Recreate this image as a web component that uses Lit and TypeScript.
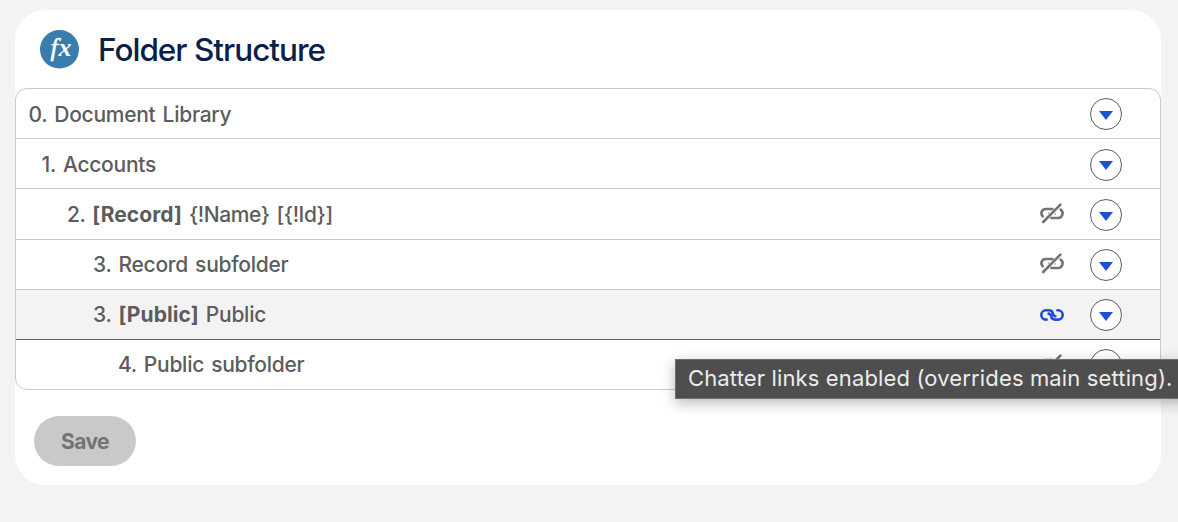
import { LitElement, html, css, svg, nothing } from 'lit';
import { customElement, property } from 'lit/decorators.js';

type LinkState = 'none' | 'off' | 'on';

interface Folder {
  level: number;
  tag?: string;
  name: string;
  link: LinkState;
  active?: boolean;
}

const folders: Folder[] = [
  { level: 0, name: 'Document Library', link: 'none' },
  { level: 1, name: 'Accounts', link: 'none' },
  { level: 2, tag: '[Record]', name: '{!Name} [{!Id}]', link: 'off' },
  { level: 3, name: 'Record subfolder', link: 'off' },
  { level: 3, tag: '[Public]', name: 'Public', link: 'on', active: true },
  { level: 4, name: 'Public subfolder', link: 'off' },
];

@customElement('link-icon')
export class LinkIcon extends LitElement {
  @property() state: LinkState = 'off';

  static styles = css`
    :host {
      display: block;
      width: 24px;
      height: 20px;
    }

    svg {
      display: block;
      overflow: visible;
      fill: none;
      stroke: currentColor;
      stroke-width: 2.6;
      stroke-linecap: round;
    }
  `;

  render() {
    const linked = svg`
      <path d="M6.6 14.6H6A4.7 4.7 0 0 1 6 5.2H8.6C11.6 5.2 12.6 6.8 12.8 8.4C13 10 13.8 11 15.4 11.2" />
      <path d="M17.4 5.2H18A4.7 4.7 0 0 1 18 14.6H15.4C12.4 14.6 11.4 13 11.2 11.4C11 9.8 10.2 8.8 8.6 8.6" />
    `;
    const unlinked = svg`
      <path d="M2.8 12.4C-.2 9.2 2 5 5.8 5H12.4" />
      <path d="M20.6 5.6C24.6 8.4 22 14 18.2 14H11.4" />
      <path d="M3.2 18L20.4 .6" />
      <path stroke-width="1.2" d="M8.4 9h.6M15 10h.6" />
    `;
    return html`<svg width="24" height="20" viewBox="0 0 24 20">
      ${this.state === 'on' ? linked : unlinked}
    </svg>`;
  }
}

@customElement('folder-row')
export class FolderRow extends LitElement {
  @property({ attribute: false }) folder!: Folder;

  static styles = css`
    :host {
      display: flex;
      align-items: center;
      color: #5c5c5c;
      font-size: 21px;
      font-weight: 500;
    }

    .label {
      flex: 1;
      white-space: pre;
      line-height: 26px;
      padding-top: 1px;
      letter-spacing: -0.27px;
      word-spacing: 1.8px;
    }

    .level-0 { padding: 3px 0 0 12.5px; }
    .level-1 { padding: 3px 0 0 25.5px; }
    .level-2 { padding-left: 51px; letter-spacing: -0.42px; }
    .level-3 { padding-left: 77px; }
    .level-4 { padding-left: 102px; }

    b {
      font-weight: 700;
      letter-spacing: 0.08px;
    }

    link-icon {
      margin-right: 26px;
      color: #747474;
    }

    .level-3 ~ .off {
      margin-bottom: 1px;
    }

    .on {
      color: #1f4fd6;
    }

    .menu {
      box-sizing: border-box;
      width: 32px;
      height: 32px;
      margin: 1px 38px 0 0;
      padding: 0;
      border: 1px solid #5c5c5c;
      border-radius: 50%;
      background: #fff;
      display: flex;
      align-items: center;
      justify-content: center;
    }

    .level-1 ~ .menu {
      margin-top: 3px;
    }

    .menu svg {
      margin: 3px 1px 0 0;
      fill: #1f4fd6;
    }

    .level-1 ~ .menu svg {
      margin-top: 1px;
    }
  `;

  render() {
    const { level, tag, name, link } = this.folder;
    return html`
      <div class="label level-${level}">${level}. ${tag ? html`<b>${tag}</b> ` : nothing}${name}</div>
      ${link === 'none' ? nothing : html`<link-icon class=${link} .state=${link}></link-icon>`}
      <button class="menu">
        <svg width="14" height="9" viewBox="0 0 14 9"><path d="M0 0H14L7 9Z" /></svg>
      </button>
    `;
  }
}

@customElement('app-root')
export class AppRoot extends LitElement {
  static styles = css`
    :host {
      display: block;
      position: relative;
      box-sizing: border-box;
      height: 522px;
      padding: 10px 17px 0 15px;
      overflow: hidden;
      background: #f3f3f3;
      font-family: Inter, 'Liberation Sans', sans-serif;
    }

    .card {
      height: 475px;
      border-radius: 30px;
      background: #fff;
    }

    header {
      display: flex;
      align-items: center;
      height: 78px;
      padding-left: 25px;
      gap: 19px;
    }

    h1 {
      margin: 2px 0 0;
      color: #0b1f4b;
      font-size: 31.5px;
      font-weight: 450;
      letter-spacing: -1px;
      line-height: 40px;
    }

    .fx {
      fill: #fff;
      font-family: 'Liberation Serif', serif;
      font-style: italic;
    }

    .f {
      stroke: #fff;
      stroke-width: 0.6;
    }

    .x {
      font-weight: 700;
    }

    .list {
      box-sizing: border-box;
      height: 302px;
      border: 1px solid #c9c9c9;
      border-radius: 12px;
      overflow: hidden;
      display: grid;
      grid-template-rows: 50px 50px 51px 50px 50px 49px;
    }

    folder-row {
      border-bottom: 1px solid #c9c9c9;
    }

    folder-row:last-child {
      border-bottom: none;
    }

    folder-row.active {
      background: #f3f3f3;
      border-bottom-color: #5c5c5c;
    }

    .save {
      display: block;
      width: 102px;
      height: 50px;
      margin: 26px 0 0 19px;
      padding: 0;
      border: none;
      border-radius: 25px;
      background: #c9c9c9;
      color: #747474;
      font: 650 21px Inter, 'Liberation Sans', sans-serif;
      letter-spacing: -0.6px;
    }

    .tooltip {
      position: absolute;
      left: 675px;
      top: 359px;
      box-sizing: border-box;
      width: 520px;
      height: 40px;
      padding-left: 12px;
      border: 1px solid #707070;
      background: #4e4e4e;
      box-shadow: 0 4px 14px rgba(0, 0, 0, 0.28);
      color: #ececec;
      font-size: 22px;
      letter-spacing: 0.14px;
      line-height: 37px;
      white-space: nowrap;
    }
  `;

  render() {
    return html`
      <div class="card">
        <header>
          <svg width="39" height="39" viewBox="0 0 39 39">
            <ellipse cx="19.5" cy="19.3" rx="19.5" ry="19.2" fill="#3a7cab" />
            <text class="fx f" x="10.6" y="26" font-size="26">f</text>
            <text class="fx x" x="18.4" y="26" font-size="26">x</text>
          </svg>
          <h1>Folder Structure</h1>
        </header>
        <div class="list">
          ${folders.map(
            (f) => html`<folder-row class=${f.active ? 'active' : ''} .folder=${f}></folder-row>`
          )}
        </div>
        <button class="save" disabled>Save</button>
      </div>
      <div class="tooltip" role="tooltip">Chatter links enabled (overrides main setting).</div>
    `;
  }
}
